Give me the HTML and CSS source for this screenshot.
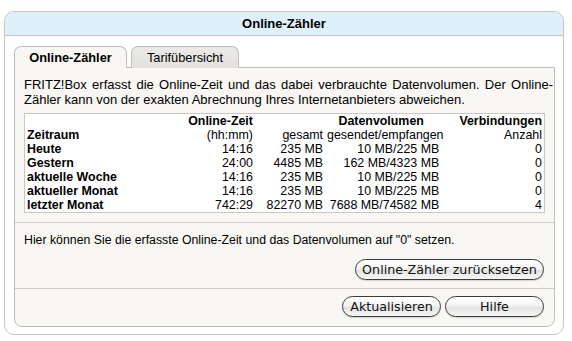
FILE: index.html
```html
<!DOCTYPE html>
<html lang="de">
<head>
    <meta charset="UTF-8">
    <title>Online-Zähler</title>
    <link rel="stylesheet" href="styles.css">
</head>
<body>
    <div class="dialog">
        <div class="dialog-title">Online-Zähler</div>
        <div class="dialog-body">
            <div class="tabs">
                <div class="tab active">Online-Zähler</div>
                <div class="tab">Tarifübersicht</div>
            </div>
            <div class="panel">
                <div class="section">
                    <p class="intro">FRITZ!Box erfasst die Online-Zeit und das dabei verbrauchte Datenvolumen. Der Online-Zähler kann von der exakten Abrechnung Ihres Internetanbieters abweichen.</p>
                    <table class="stats">
                        <colgroup>
                            <col class="c-period">
                            <col class="c-time">
                            <col class="c-total">
                            <col class="c-volume">
                            <col class="c-conn">
                        </colgroup>
                        <tr class="head">
                            <th></th>
                            <th>Online-Zeit</th>
                            <th></th>
                            <th class="center">Datenvolumen</th>
                            <th>Verbindungen</th>
                        </tr>
                        <tr class="sub">
                            <th class="label">Zeitraum</th>
                            <td>(hh:mm)</td>
                            <td>gesamt</td>
                            <td>gesendet/empfangen</td>
                            <td>Anzahl</td>
                        </tr>
                        <tr>
                            <th class="label">Heute</th>
                            <td>14:16</td>
                            <td>235 MB</td>
                            <td>10 MB/225 MB</td>
                            <td>0</td>
                        </tr>
                        <tr>
                            <th class="label">Gestern</th>
                            <td>24:00</td>
                            <td>4485 MB</td>
                            <td>162 MB/4323 MB</td>
                            <td>0</td>
                        </tr>
                        <tr>
                            <th class="label">aktuelle Woche</th>
                            <td>14:16</td>
                            <td>235 MB</td>
                            <td>10 MB/225 MB</td>
                            <td>0</td>
                        </tr>
                        <tr>
                            <th class="label">aktueller Monat</th>
                            <td>14:16</td>
                            <td>235 MB</td>
                            <td>10 MB/225 MB</td>
                            <td>0</td>
                        </tr>
                        <tr>
                            <th class="label">letzter Monat</th>
                            <td>742:29</td>
                            <td>82270 MB</td>
                            <td>7688 MB/74582 MB</td>
                            <td>4</td>
                        </tr>
                    </table>
                </div>
                <div class="section reset">
                    <p>Hier können Sie die erfasste Online-Zeit und das Datenvolumen auf "0" setzen.</p>
                    <div class="btn-row">
                        <button class="btn btn-wide">Online-Zähler zurücksetzen</button>
                    </div>
                </div>
                <div class="section actions">
                    <div class="btn-row">
                        <button class="btn">Aktualisieren</button>
                        <button class="btn">Hilfe</button>
                    </div>
                </div>
            </div>
        </div>
    </div>
</body>
</html>
```

FILE: styles.css
```css
* {
    margin: 0;
    padding: 0;
    box-sizing: border-box;
}

body {
    background-color: #fff;
    font-family: "Liberation Sans", Arial, sans-serif;
    font-size: 12px;
    color: #000;
}

.dialog {
    margin: 11px 0 0 4px;
    width: 560px;
    height: 324px;
    border: 1px solid #c4c4c0;
    border-radius: 10px;
    background-color: #fff;
}

.dialog-title {
    height: 24px;
    line-height: 24px;
    text-align: center;
    font-size: 13px;
    font-weight: bold;
    background-color: #ddf0fb;
    border-bottom: 1px solid #c4c4c0;
    border-radius: 9px 9px 0 0;
}

.dialog-body {
    padding: 10px 8px 0 9px;
}

/* tabs */
.tabs {
    display: flex;
    gap: 4px;
    height: 22px;
    margin-bottom: -1px;
    position: relative;
}

.tab {
    width: 108px;
    line-height: 21px;
    text-align: center;
    font-size: 12.8px;
    border: 1px solid #bdbdb9;
    border-bottom: none;
    border-radius: 7px 7px 0 0;
    background: linear-gradient(#ebeae6, #e2e1dd);
}

.tab.active {
    width: 113px;
    font-weight: bold;
    background: #f8f7f3;
    height: 22px;
}

.panel {
    height: 260px;
    border: 1px solid #bdbdb9;
    border-radius: 0 0 8px 8px;
    background-color: #f8f7f3;
}

.section {
    padding: 9px 0 9px 9px;
    border-bottom: 1px solid #cfcecb;
}

.section:last-child {
    border-bottom: none;
}

.intro {
    font-size: 13px;
    line-height: 15px;
    text-align: justify;
    margin-right: 1px;
    margin-bottom: 6px;
}

/* statistics table */
.stats {
    width: 521px;
    border: 1px solid #c8c8c4;
    border-collapse: collapse;
    table-layout: fixed;
    background-color: #fff;
    font-size: 12.4px;
}

.stats th,
.stats td {
    height: 14px;
    line-height: 14px;
    padding: 0 2px;
    text-align: right;
    white-space: nowrap;
}

.stats th {
    font-weight: bold;
}

.stats .center {
    text-align: center;
    padding-left: 0;
    padding-right: 4px;
}

.stats .label {
    text-align: left;
}

.c-period { width: 150px; }
.c-time { width: 80px; }
.c-total { width: 70px; }
.c-volume { width: 116px; }
.c-conn { width: 103px; }

/* reset section */
.reset {
    padding-top: 10px;
    padding-bottom: 8px;
}

.reset p {
    font-size: 12.3px;
    line-height: 15px;
}

.btn-row {
    display: flex;
    justify-content: flex-end;
    gap: 4px;
    padding-right: 10px;
}

.reset .btn-row {
    margin-top: 11px;
}

.actions {
    padding-top: 7px;
}

.btn {
    height: 21px;
    width: 99px;
    border: 1px solid #3c3c3c;
    border-radius: 11px;
    background: linear-gradient(#ffffff 0%, #f3f3f3 45%, #e3e3e3 55%, #f6f6f6 100%);
    font-family: "DejaVu Sans", sans-serif;
    font-size: 12.7px;
    color: #111;
    box-shadow: 0 1px 1px rgba(0, 0, 0, 0.15);
}

.btn-wide {
    width: 189px;
}
```
